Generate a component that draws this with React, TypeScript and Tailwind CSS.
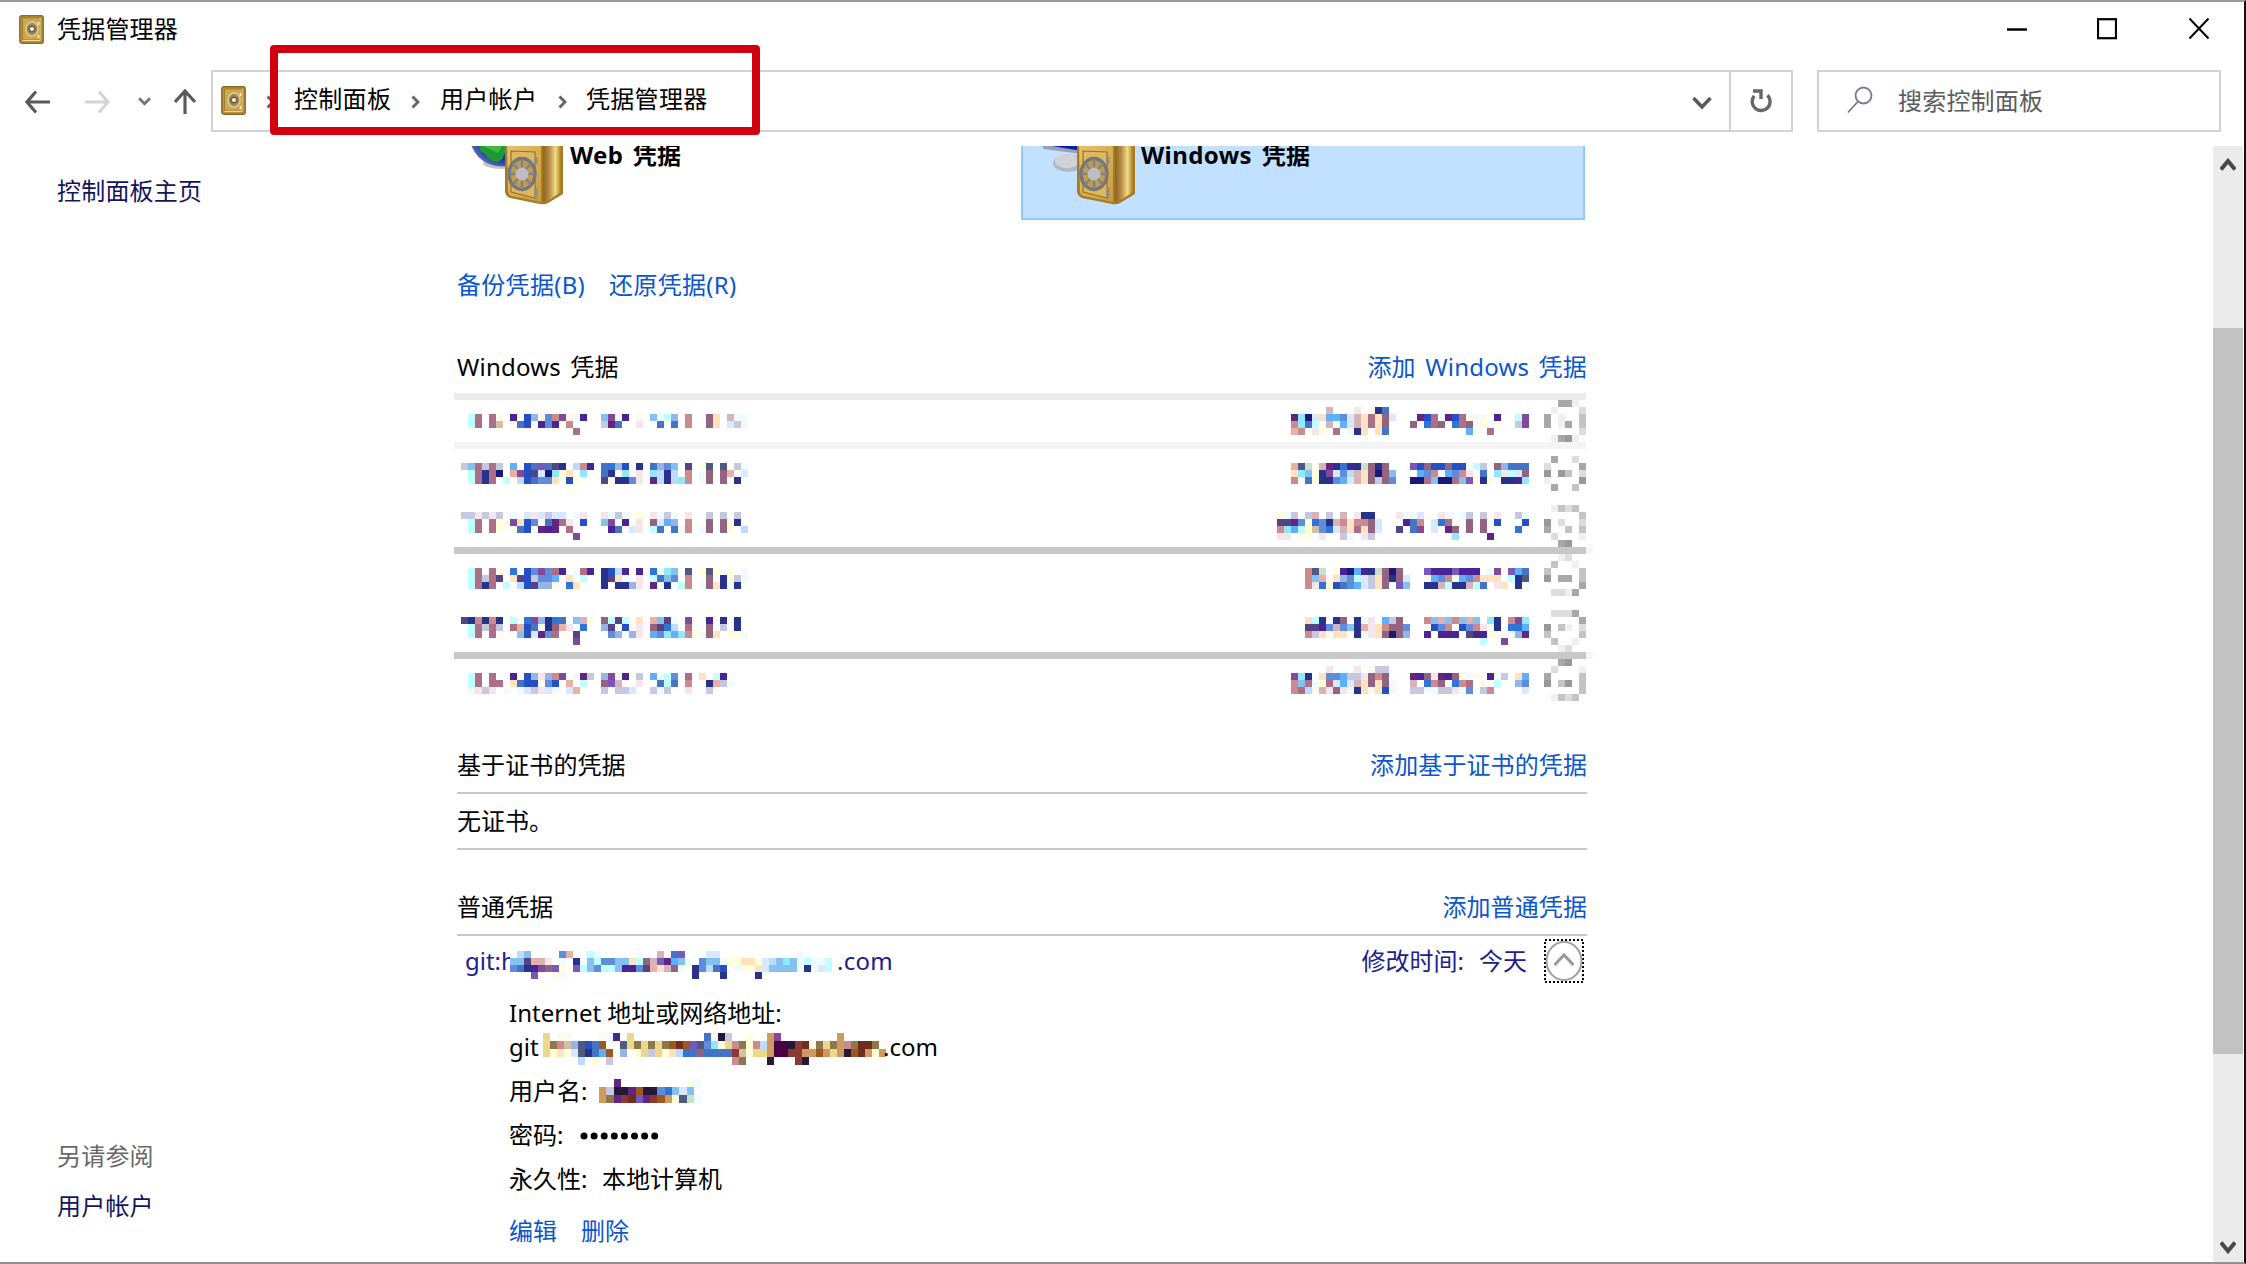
import React from "react";

const PALETTE: Record<string, string> = {
  c: "#c0ffff", p: "#ad6e88", P: "#936482", k: "#cc8a8c", o: "#fff8ec", t: "#d4bfa5",
  v: "#4a2496", b: "#2450c4", B: "#5f8cdc", l: "#94b4ea", m: "#4674c4", s: "#5cb0ff",
  n: "#28328a", N: "#1a1878", w: "#eefcff", i: "#bcdcff", a: "#84c0f0", g: "#c6c8e0",
  r: "#f4e6ea", e: "#eab0a4", y: "#ffffdc", d: "#544484", u: "#84489a", f: "#ffe2c0",
  h: "#642482", q: "#505a7e", z: "#d4b4b8", x: "#90e8ff", j: "#d8e8ff", G: "#cce0cc",
  R: "#3074d8", V: "#7858b8", C: "#ecd88c", A: "#8c7848", D: "#9c5820", E: "#702c1c",
  F: "#480040", H: "#cf9a60", I: "#281838", J: "#8c3834",
  "1": "#a8a8a8", "2": "#c4c4c4", "3": "#dddddd", "4": "#f0f0f0", "5": "#999999",
};

type Row = [number, string];

function Cells({ x, rows, cw = 7, ch = 7 }: { x: number; rows: Row[]; cw?: number; ch?: number }) {
  return (
    <g shapeRendering="crispEdges">
      {rows.map(([y, s]) =>
        s.split("").map((c, i) =>
          c === "." ? null : (
            <rect key={`${y}-${i}`} x={x + i * cw} y={y} width={cw} height={ch} fill={PALETTE[c]} />
          )
        )
      )}
    </g>
  );
}

const LEFT: Row[] = [
  [21, "..cp.po.vobloBkuowv..auwv.o.awcl.k..Pf.zww"],
  [28, "..cp.pt.omb.vBv.k....ghm..r..m.m.k..Pf.jgw"],
  [35, ".................p"],
  [70, ".gapgpg.s.bmVmdn.ikv.mRlb.n.mlBa.d.yq.q.gw"],
  [77, "..cpnpN.eubdjNxyf.x..mnox.r.xini.k.wP.Pe.j"],
  [84, "..cpnp.c.ibmBBf.by...donnBr.hinixk.wP.P.n."],
  [119, ".ggrgrg.w.jrjgjj.wr..rwgw.y.rwgw.r..g.g.g."],
  [126, "..cp.pyoufbB.mhpr.b..auwv.r.Pjsl.k..P.Pyn."],
  [133, "..cp.py.omb.hvh.p.....vm.jr.cm.mwk.wP.Py.i"],
  [140, ".................u"],
  [175, "..cp.po.R.bBuBpv.wpv.nbiv.v.Rwxa.q.yqy.y.w"],
  [182, "..cpgpd.fdbgBBs.f.c..ndfw.r.cmaB.k..P.nygw"],
  [189, "..cpnp.c.ibdllo.Rf...n.nnlr.hwnwck.wPfnwn."],
  [224, ".dnknkn.c.RulnRm.azy.Pcdc.f.eadw.u..v.n.n."],
  [231, "..cpgpg.pebm.nPer.R..ld.b.r.PdRi.p..P.g.n."],
  [238, "..cp.po..abjhBp..d....Bl.lr.sBxsxkywPf.yyw"],
  [245, ".................u"],
  [280, "..cp.p..v.blrlku.whg.luwv.g.swcB.p.f.cv"],
  [287, "..cp.pp.fmbb.Bb.e.c..PVz..r..mcm.k..negw"],
  [294, "..wrgr.w.wjgrjw.je...g.ggj..gwg..r..g"],
];

const RIGHT: Row[] = [
  [14, "..o.w..z...r.onm"],
  [21, "..hxNjfssBjzfpfPj...hbp.hbpowo.v..cu"],
  [28, "..kxmc.zwsjzfpfP...P.RpP.RpP.yw...gu"],
  [35, "..ek.ry.p.wnf.fm...........s..p"],
  [70, "..eqG.zhnRvnGPnP...VbPbbPbb.cg.Plmmm"],
  [77, "..fxaynujBizfPNPa...sBk.sBkr.m.xrcjP"],
  [84, "..k.mynnBsjzfPgPB..NNpaNNpaVyny.nnvx"],
  [119, "ywg.gz.g.z.rnn...rwwj..rw.wg.g.r..gw"],
  [126, "ddhByRBnzkfkkPj...vmk.jRpo.P.P.b...b"],
  [133, "kxscytBRjzfpfPj..d.mu.j.hP.P.P....R"],
  [140, "rr.oy.r..gw.rg...........x....h"],
  [175, "....kqG.yvNsvnGPNP...VvvvVvvv.wu.Vsm"],
  [182, "....kae.flBcjgfPnPj..osBkosBkfff.cnq"],
  [189, "....krRybmBsjgfP.Va..nnzcnnzcm.rf.n"],
  [224, "....fcn.nP.nwr.sgP...kazakaza.xn.kux"],
  [231, "....ddvBzBanerfkPPB...bBk.bBkr.n.RRs"],
  [238, "....kgfoff.nwrfPNPl..v.vvv.dvvyo.wlh"],
  [245, ".............................c..u"],
  [273, ".......r...r.ogg"],
  [280, "..uxn.fBBsggrPkP...hvPrhvPywo.v.g.fs"],
  [287, "..kapwypjsjzfPfPw..z.RkP.Rkp.o.c..lB"],
  [294, "..kpiozrPrwnfofbw..ggwwggrwB.gk....j"],
];

const RINGS: Row[] = [
  [7, "..114."], [14, ".4...3"], [21, "1.4..2"], [28, "1.41.2"], [35, ".....3"], [42, ".4154."],
  [63, ".1..3."], [70, "3....1"], [77, "5.52.3"], [84, "4....5"], [91, ".1..2."],
  [112, ".4232."], [119, ".....2"], [126, "5.3..3"], [133, "1..2.2"], [140, ".3...4"], [147, "..15.."],
  [161, "..43.."], [168, ".2..4."], [175, "2....2"], [182, "5.11.2"], [189, ".....1"], [196, ".3341."],
  [217, ".3331."], [224, ".....1"], [231, "5.24.3"], [238, "2....2"], [245, ".2..4."], [252, "..43.."],
  [266, "..15.."], [273, ".3...4"], [280, "1....2"], [287, "5.25.2"], [294, ".....2"], [301, ".4232."],
];

const GIT: Row[] = [
  [0, ".ia....Be..cw........z.mV...jj...........w"],
  [7, "aadezr.w.nwacBBaafcPzVhsaw.Baawyyffyjiaxawcwwc"],
  [14, "BmnvuPVy.VcaBccavvBdefzPw.nBimb.wyyfjaaaawnwjc"],
  [21, "...V..ow..................n...n....n"],
];

const URL_ROWS: Row[] = [
  [0, "C.oo....owv.C..........moIg..y..Hu........H"],
  [8, "CAktlqbmD..qCACACADEDVqBxyCkAykiHFFIJEyACAHkAEEA"],
  [16, "CyfyjqnmsD.l.yCgCyfiRmPmmmmJtyCCHFFJJHHDHCHIDEHyH"],
  [24, ".....i.y.g.................kA...I...JI"],
];

const USER_ROWS: Row[] = [
  [0, "..h.........yw"],
  [8, "HgIIhDIIBRaja"],
  [16, "HAhJEVhJDHyqGw"],
];

function SafeSmall() {
  return (
    <svg width="25" height="29" viewBox="0 0 25 29" className="shrink-0">
      <rect x="0.8" y="0.8" width="23.4" height="27.4" rx="2" fill="#b8923c" stroke="#8a6a24" strokeWidth="1.4" />
      <rect x="3.5" y="3" width="17" height="22" fill="#cfa84c" stroke="#a07c2c" strokeWidth="1" />
      <path d="M3.5 25.5h17.5V3" fill="none" stroke="#f0d890" strokeWidth="1" />
      <ellipse cx="13" cy="14" rx="6" ry="7" fill="#a08850" stroke="#d8ccb0" strokeWidth="1.4" />
      <circle cx="13" cy="14" r="2.8" fill="#f4f0e4" stroke="#6c5c34" strokeWidth="1.4" />
      <path d="M19.5 7v3M19.5 20v3" stroke="#fff4cc" strokeWidth="1.6" />
    </svg>
  );
}

function SafeLarge({ kind }: { kind: "web" | "win" }) {
  return (
    <svg width="93" height="60" viewBox="0 0 93 60" className="shrink-0">
      <defs>
        <linearGradient id={`side-${kind}`} x1="0" x2="1">
          <stop offset="0" stopColor="#8a6420" />
          <stop offset="0.35" stopColor="#b88c48" />
          <stop offset="0.7" stopColor="#f0dc84" />
          <stop offset="1" stopColor="#a87c20" />
        </linearGradient>
        <linearGradient id={`front-${kind}`} x1="0" x2="1" y2="1">
          <stop offset="0" stopColor="#e8c470" />
          <stop offset="1" stopColor="#c89c3c" />
        </linearGradient>
        <radialGradient id={`globe-${kind}`} cx="0.6" cy="0.4" r="0.65">
          <stop offset="0" stopColor="#3c70e0" />
          <stop offset="0.75" stopColor="#1c2ca0" />
          <stop offset="1" stopColor="#5878b8" />
        </radialGradient>
      </defs>
      {kind === "web" ? (
        <>
          <ellipse cx="31" cy="17" rx="18" ry="6" fill="#c4c4c4" />
          <circle cx="31" cy="-11" r="31.500" fill="url(#globe-web)" />
          <path d="M9 0c0 5 3 6 6 8 3 5 9 9 14 7 5-1 4-6 6-8V0z" fill="#1e9a34" />
          <path d="M14 0c4 3 9 4 14 7l4-7z" fill="#42b83c" />
        </>
      ) : (
        <>
          <ellipse cx="26" cy="17" rx="15" ry="9" fill="#b0b8c4" />
          <ellipse cx="25" cy="15" rx="12" ry="7" fill="#d0d2d8" />
          <path d="M0 0h40v8L2 3z" fill="#98a0b4" />
          <path d="M10 0h30v5z" fill="#0c1cac" />
        </>
      )}
      <path d="M35 -4h58v52L78 57q-3 2-8 1L40 52q-5-2-5-7z" fill="#a47c24" />
      <path d="M73 -4h18v50L76 56h-3z" fill={`url(#side-${kind})`} />
      <path d="M37 -4h34v60L42 50q-4-1-4-5z" fill={`url(#front-${kind})`} />
      <path d="M41 5l24 1v46L41 46z" fill="#dcb860" stroke="#9c7420" strokeWidth="1.2" />
      <path d="M66 12v5M66 43v8" stroke="#8c8c90" strokeWidth="3" strokeLinecap="round" />
      <ellipse cx="52" cy="28" rx="13" ry="15.5" fill="#c09c50" stroke="#74767c" strokeWidth="3.4" />
      <path d="M52 13v30M39 28h26M43 17l18 22M61 17L43 39" stroke="#808288" strokeWidth="2.4" />
      <circle cx="52" cy="28" r="6.500" fill="#bcbec2" />
    </svg>
  );
}

function Chevron() {
  return (
    <svg width="9" height="14" viewBox="0 0 9 14" className="shrink-0 translate-y-px">
      <path d="M1.5 1.5L7 7l-5.500 5.500" fill="none" stroke="#666" strokeWidth="3" />
    </svg>
  );
}

const LINK = "text-[#0b56cc]";

export default function App() {
  return (
    <div className="relative flex h-[1264px] w-[2246px] flex-col overflow-hidden border-t-2 border-r-2 border-b-2 border-t-[#999999] border-r-[#111111] border-b-[#909090] bg-white font-['Noto_Sans','Noto_Sans_CJK_SC',sans-serif] text-[24px] leading-8 whitespace-pre text-black">
      <header className="flex h-[54px] shrink-0 items-center pr-[35px] pl-[19px]">
        <SafeSmall />
        <span className="ml-[13px] tracking-[0.2px]">凭据管理器</span>
        <div className="ml-auto flex items-center">
          <svg width="20" height="22" viewBox="0 0 20 22"><path d="M0 11.500h20" stroke="#000" strokeWidth="2.500" /></svg>
          <svg width="20" height="22" viewBox="0 0 20 22" className="ml-[70px]"><rect x="1" y="1.200" width="18" height="19" fill="none" stroke="#000" strokeWidth="2.200" /></svg>
          <svg width="20" height="22" viewBox="0 0 20 22" className="ml-[72px]"><path d="M0.500 0.500L19.500 20.500M19.500 0.500L0.500 20.500" stroke="#000" strokeWidth="2" /></svg>
        </div>
      </header>

      <nav className="mt-3.5 flex h-[62px] shrink-0 items-center pl-[25px]">
        <svg width="26" height="24" viewBox="0 0 26 24" fill="none" stroke="#5a5a5a" strokeWidth="3.200" className="translate-y-px"><path d="M25 12H2M11 1.500L2 12l9 10.500" /></svg>
        <svg width="26" height="24" viewBox="0 0 26 24" fill="none" stroke="#d4d4d4" strokeWidth="3" className="ml-[34px] translate-y-px"><path d="M0 12h23M14 1.500l9 10.500-9 10.500" /></svg>
        <svg width="13" height="9" viewBox="0 0 13 9" fill="none" stroke="#777" strokeWidth="3" className="ml-[27px]"><path d="M1 1.200l5.500 5.500L12 1.200" /></svg>
        <svg width="24" height="26" viewBox="0 0 24 26" fill="none" stroke="#5a5a5a" strokeWidth="3.200" className="ml-[22px] translate-y-px"><path d="M12 25V2M2 13L12 2l10 11" /></svg>
        <div className="ml-[14px] flex h-full w-[1582px] items-center border-2 border-[#d2d2d2]">
          <div className="ml-2 flex -translate-y-px"><SafeSmall /></div>
          <div className="mr-[19px] ml-5"><Chevron /></div>
          <span className="w-[98px] -translate-y-0.5 tracking-[0.3px]">控制面板</span>
          <div className="ml-[19px] w-[29px]"><Chevron /></div>
          <span className="w-[98px] -translate-y-0.5 tracking-[0.3px]">用户帐户</span>
          <div className="ml-[20px] w-[28px]"><Chevron /></div>
          <span className="-translate-y-0.5 tracking-[0.3px]">凭据管理器</span>
          <svg width="20" height="14" viewBox="0 0 20 14" fill="none" stroke="#5a5a5a" strokeWidth="3.600" className="mr-[17px] ml-auto translate-y-0.5"><path d="M1.500 2l8.500 9L18.500 2" /></svg>
          <div className="flex h-full w-[62px] items-center justify-center border-l-2 border-[#d2d2d2]">
            <svg width="22" height="24" viewBox="0 0 22 24" fill="none" stroke="#666" strokeWidth="3.400">
              <path d="M17.500 6.200A9 9 0 1 1 4.200 6.800" />
              <path d="M3 2h8v8" />
            </svg>
          </div>
        </div>
        <div className="ml-6 flex h-full w-[404px] items-center border-2 border-[#d2d2d2] pl-7">
          <svg width="26" height="28" viewBox="0 0 26 28" fill="none" stroke="#77778c" strokeWidth="1.800" className="-translate-y-px"><circle cx="16.500" cy="9.500" r="8" /><path d="M11 15.500L1 26.500" /></svg>
          <span className="ml-[25px] tracking-[0.2px] text-[#5c5c5c]">搜索控制面板</span>
        </div>
      </nav>

      <div className="mt-3.5 flex min-h-0 flex-1">
        <aside className="flex w-[428px] shrink-0 flex-col pb-10 pl-[57px] tracking-[0.2px]">
          <span className="mt-[29px] text-[#14145c]">控制面板主页</span>
          <span className="mt-auto text-[#686868]">另请参阅</span>
          <span className="mt-[18px] text-[#14145c]">用户帐户</span>
        </aside>

        <main className="ml-[29px] w-[1130px] shrink-0">
          <div className="flex h-[74px]">
            <div className="flex w-[564px] items-start overflow-hidden pl-[13px]">
              <SafeLarge kind="web" />
              <span className="-mt-[7px] ml-[7px] font-bold tracking-[0.3px] [word-spacing:3px]">Web 凭据</span>
            </div>
            <div className="flex w-[564px] items-start overflow-hidden border-x-2 border-b-2 border-[#90c8ff] bg-[#c2e0ff] pl-[19px]">
              <SafeLarge kind="win" />
              <span className="-mt-[7px] ml-[6px] font-bold tracking-[0.4px] [word-spacing:3px]">Windows 凭据</span>
            </div>
          </div>

          <div className={`mt-[49px] flex gap-6 tracking-[0.3px] ${LINK}`}>
            <span>备份凭据(B)</span>
            <span>还原凭据(R)</span>
          </div>

          <div className="mt-[50px] flex justify-between tracking-[0.2px] [word-spacing:3px]">
            <span>Windows 凭据</span>
            <span className={LINK}>添加 Windows 凭据</span>
          </div>

          <svg width="1139" height="308" viewBox="0 0 1139 308" className="mt-2.5 -ml-[3px] block max-w-none">
            <g shapeRendering="crispEdges">
              <rect y="0" width="1132" height="7" fill="#ebebeb" />
              <rect y="49" width="1132" height="7" fill="#f4f4f4" />
              <rect y="154" width="1132" height="7" fill="#c8c8c8" />
              <rect y="259" width="1132" height="7" fill="#c8c8c8" />
              <rect x="1132" y="154" width="7" height="7" fill="#f6f6f6" />
              <rect x="1132" y="259" width="7" height="7" fill="#f6f6f6" />
            </g>
            <Cells x={0} rows={LEFT} />
            <Cells x={823} rows={RIGHT} />
            <Cells x={1090} rows={RINGS} />
          </svg>

          <div className="mt-9 flex h-[57px] items-center justify-between border-b-2 border-[#c8c8c8] tracking-[0.1px]">
            <span>基于证书的凭据</span>
            <span className={LINK}>添加基于证书的凭据</span>
          </div>
          <div className="flex h-14 items-center border-b-2 border-[#c8c8c8]">无证书。</div>

          <div className="mt-[30px] flex h-14 items-center justify-between border-b-2 border-[#c8c8c8] tracking-[0.1px]">
            <span>普通凭据</span>
            <span className={LINK}>添加普通凭据</span>
          </div>

          <div className="flex h-[50px] items-center pr-[3px] pl-2 text-[#20208c]">
            <span className="w-[45px] overflow-hidden">git:h</span>
            <svg width="322" height="28" viewBox="0 0 322 28" className="mt-2 shrink-0"><Cells x={0} rows={GIT} /></svg>
            <span className="ml-[5px] tracking-[0.3px]">.com</span>
            <span className="ml-auto">修改时间:</span>
            <span className="ml-[15px]">今天</span>
            <svg width="40" height="44" viewBox="0 0 40 44" fill="none" className="ml-[17px]">
              <rect x="1" y="1" width="38" height="42" stroke="#000" strokeWidth="2" strokeDasharray="2 2" />
              <ellipse cx="20" cy="22" rx="17.500" ry="19" stroke="#a0a0a0" strokeWidth="2" />
              <path d="M10.500 26L20 16l9.500 10" stroke="#999" strokeWidth="3" />
            </svg>
          </div>

          <div className="pl-[52px]">
            <div className="mt-[11px] h-8">Internet 地址或网络地址:</div>
            <div className="flex h-9 items-center">
              <span className="w-[33px]">git</span>
              <svg width="343" height="32" viewBox="0 0 343 32" className="mt-1 ml-px shrink-0"><Cells x={0} rows={URL_ROWS} ch={8} /></svg>
              <span className="-ml-[3px]">.com</span>
            </div>
            <div className="mt-1 flex h-11 items-center">
              <span className="w-[90px]">用户名:</span>
              <svg width="103" height="24" viewBox="0 0 103 24"><Cells x={0} rows={USER_ROWS} cw={7.3} ch={8} /></svg>
            </div>
            <div className="flex h-11 items-center">
              <span className="w-[71px]">密码:</span>
              <svg width="80" height="8" viewBox="0 0 80 8" className="mt-0.5">
                {Array.from({ length: 8 }, (_, i) => (
                  <circle key={i} cx={4 + i * 10.1} cy="4" r="3.500" fill="#000" />
                ))}
              </svg>
            </div>
            <div className="flex h-11 items-center">
              <span className="w-[93px]">永久性:</span>
              <span>本地计算机</span>
            </div>
            <div className={`mt-3.5 flex gap-6 ${LINK}`}>
              <span>编辑</span>
              <span>删除</span>
            </div>
          </div>
        </main>

        <div className="mr-px ml-auto flex w-[30px] shrink-0 flex-col items-center bg-[#ebebeb] pt-3 pb-2">
          <svg width="16" height="13" viewBox="0 0 16 13" fill="none" stroke="#484848" strokeWidth="4"><path d="M1 11.500L8 3l7 8.500" /></svg>
          <div className="mt-[157px] h-[726px] w-full bg-[#c2c2c2]" />
          <svg width="16" height="13" viewBox="0 0 16 13" fill="none" stroke="#484848" strokeWidth="4" className="mt-auto"><path d="M1 1.500L8 10l7-8.500" /></svg>
        </div>
      </div>

      <div className="absolute top-[43px] left-[270px] h-[90px] w-[490px] rounded-[4px] border-8 border-[#d2000f]" />
    </div>
  );
}
